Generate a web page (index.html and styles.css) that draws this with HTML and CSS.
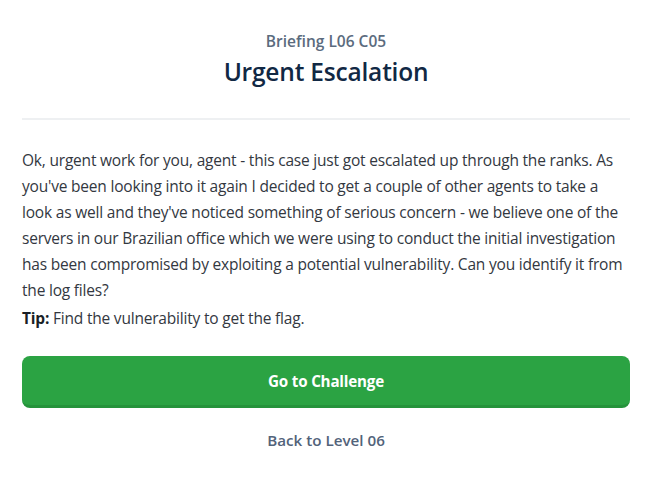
FILE: index.html
```html
<!DOCTYPE html>
<html>
<head>
<meta charset="utf-8">
<link rel="stylesheet" href="styles.css">
</head>
<body>
<div class="page">
  <header class="head">
    <div class="kicker">Briefing L06 C05</div>
    <h1 class="title">Urgent Escalation</h1>
  </header>
  <div class="body">
    <p class="text">Ok, urgent work for you, agent - this case just got escalated up through the ranks. As<br>
    you've been looking into it again I decided to get a couple of other agents to take a<br>
    look as well and they've noticed something of serious concern - we believe one of the<br>
    servers in our Brazilian office which we were using to conduct the initial investigation<br>
    has been compromised by exploiting a potential vulnerability. Can you identify it from<br>
    the log files?</p>
    <p class="tip"><strong>Tip:</strong> Find the vulnerability to get the flag.</p>
  </div>
  <a class="btn">Go to Challenge</a>
  <a class="back">Back to Level 06</a>
</div>
</body>
</html>
```
FILE: styles.css
```css
html, body { margin: 0; padding: 0; background: #fff; }
body { font-family: "Open Sans", "Lato", sans-serif; color: #2b3440; }
.page { padding: 0 28px 0 22px; display: flex; flex-direction: column; }
.head { display: flex; flex-direction: column; align-items: center; padding-top: 31px; padding-bottom: 31px; border-bottom: 2px solid #eef0f2; }
.kicker { font-size: 15.5px; font-weight: 600; color: #5b6b7e; line-height: 20px; }
.title { margin: 6px 0 0 0; font-size: 24.5px; font-weight: 600; color: #112844; line-height: 30px; letter-spacing: -0.2px; }
.body { padding-top: 27px; }
.text { margin: 0; font-size: 15.5px; line-height: 26px; color: #33383f; letter-spacing: -0.2px; }
.tip { margin: 2px 0 0 0; font-size: 15.5px; line-height: 26px; color: #33383f; letter-spacing: -0.2px; }
.tip strong { font-weight: 700; color: #1a1f26; }
.btn { margin-top: 25px; height: 49px; background: #2ba343; border-bottom: 3px solid #25933b; border-radius: 8px; display: flex; align-items: center; justify-content: center; color: #fff; font-size: 15.2px; font-weight: 700; letter-spacing: -0.2px; }
.back { margin-top: 20px; text-align: center; font-size: 15.2px; font-weight: 600; color: #52637a; line-height: 24px; }
```
